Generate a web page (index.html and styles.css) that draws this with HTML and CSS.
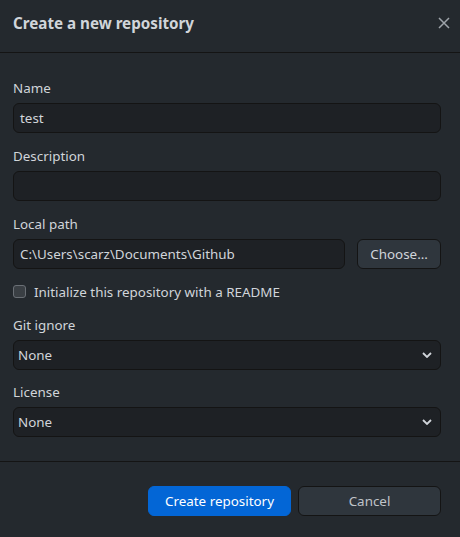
FILE: index.html
```html
<!DOCTYPE html>
<html>
<head>
<meta charset="utf-8">
<link rel="stylesheet" href="styles.css">
</head>
<body>
<div class="dialog">
  <header class="dialog-header">
    <h1 class="title">Create a new repository</h1>
    <button class="close" aria-label="Close">
      <svg width="12" height="12" viewBox="0 0 12 12"><path d="M1 1L11 11M11 1L1 11" stroke="#9ea4aa" stroke-width="1.5" fill="none"/></svg>
    </button>
  </header>
  <div class="dialog-body">
    <div class="field">
      <label class="label">Name</label>
      <div class="input">test</div>
    </div>
    <div class="field">
      <label class="label">Description</label>
      <div class="input"></div>
    </div>
    <div class="field">
      <label class="label">Local path</label>
      <div class="path-row">
        <div class="input grow">C:\Users\scarz\Documents\Github</div>
        <button class="btn choose">Choose…</button>
      </div>
    </div>
    <div class="check-row">
      <span class="checkbox"></span>
      <span class="check-label">Initialize this repository with a README</span>
    </div>
    <div class="field">
      <label class="label">Git ignore</label>
      <div class="input select">None
        <svg class="chev" width="10" height="6" viewBox="0 0 10 6"><path d="M1 1L5 5L9 1" stroke="#d1d5da" stroke-width="1.8" fill="none"/></svg>
      </div>
    </div>
    <div class="field last">
      <label class="label">License</label>
      <div class="input select">None
        <svg class="chev" width="10" height="6" viewBox="0 0 10 6"><path d="M1 1L5 5L9 1" stroke="#d1d5da" stroke-width="1.8" fill="none"/></svg>
      </div>
    </div>
  </div>
  <footer class="dialog-footer">
    <button class="btn primary">Create repository</button>
    <button class="btn secondary">Cancel</button>
  </footer>
</div>
</body>
</html>
```

FILE: styles.css
```css
html, body {
  margin: 0;
  padding: 0;
  background: #24292e;
}
body {
  font-family: "Noto Sans", "Open Sans", sans-serif;
  font-size: 13.4px;
  color: #d1d5da;
}
.dialog {
  width: 460px;
  height: 537px;
  display: flex;
  flex-direction: column;
}
.dialog-header {
  height: 53px;
  border-bottom: 1px solid #141414;
  display: flex;
  align-items: center;
  justify-content: space-between;
  padding: 0 8px 0 13px;
  box-sizing: border-box;
}
.title {
  margin: 0;
  font-size: 15.2px;
  font-weight: 700;
  color: #d1d5da;
  position: relative;
  top: -3px;
}
.close {
  background: none;
  border: none;
  padding: 0;
  width: 16px;
  height: 16px;
  display: flex;
  align-items: center;
  justify-content: center;
  position: relative;
  top: -3px;
}
.dialog-body {
  padding: 27px 19px 0 13px;
  display: flex;
  flex-direction: column;
  gap: 15px;
  flex: 1;
}
.field {
  display: flex;
  flex-direction: column;
  gap: 6px;
}
.field.last {
  margin-top: -1px;
}
.label {
  line-height: 17px;
  height: 17px;
}
.input {
  height: 30px;
  box-sizing: border-box;
  background: #1e2125;
  border: 1px solid #141414;
  border-radius: 6px;
  padding: 0 6px;
  display: flex;
  align-items: center;
  color: #d1d5da;
}
.path-row {
  display: flex;
  gap: 12px;
}
.grow {
  flex: 1;
}
.select {
  justify-content: space-between;
  padding: 0 5px 0 4px;
}
.chev {
  margin-right: 3px;
}
.check-row {
  display: flex;
  align-items: center;
  gap: 8px;
  height: 17px;
  margin-top: -1px;
  margin-bottom: 2px;
}
.checkbox {
  width: 13px;
  height: 13px;
  box-sizing: border-box;
  border: 1px solid #6a6f75;
  border-radius: 3px;
  background: #3a3f44;
}
.btn {
  font-family: inherit;
  font-size: 13.4px;
  height: 30px;
  box-sizing: border-box;
  border-radius: 6px;
  border: 1px solid #141414;
  background: #2f363d;
  color: #d1d5da;
  padding: 0;
}
.choose {
  width: 84px;
}
.dialog-footer {
  border-top: 1px solid #141414;
  height: 76px;
  box-sizing: border-box;
  display: flex;
  justify-content: flex-end;
  gap: 7px;
  padding: 24px 19px 0 0;
}
.primary {
  width: 143px;
  background: #0366d6;
  border-color: #0366d6;
  color: #fff;
}
.secondary {
  width: 143px;
  color: #c0c4c9;
}
```
